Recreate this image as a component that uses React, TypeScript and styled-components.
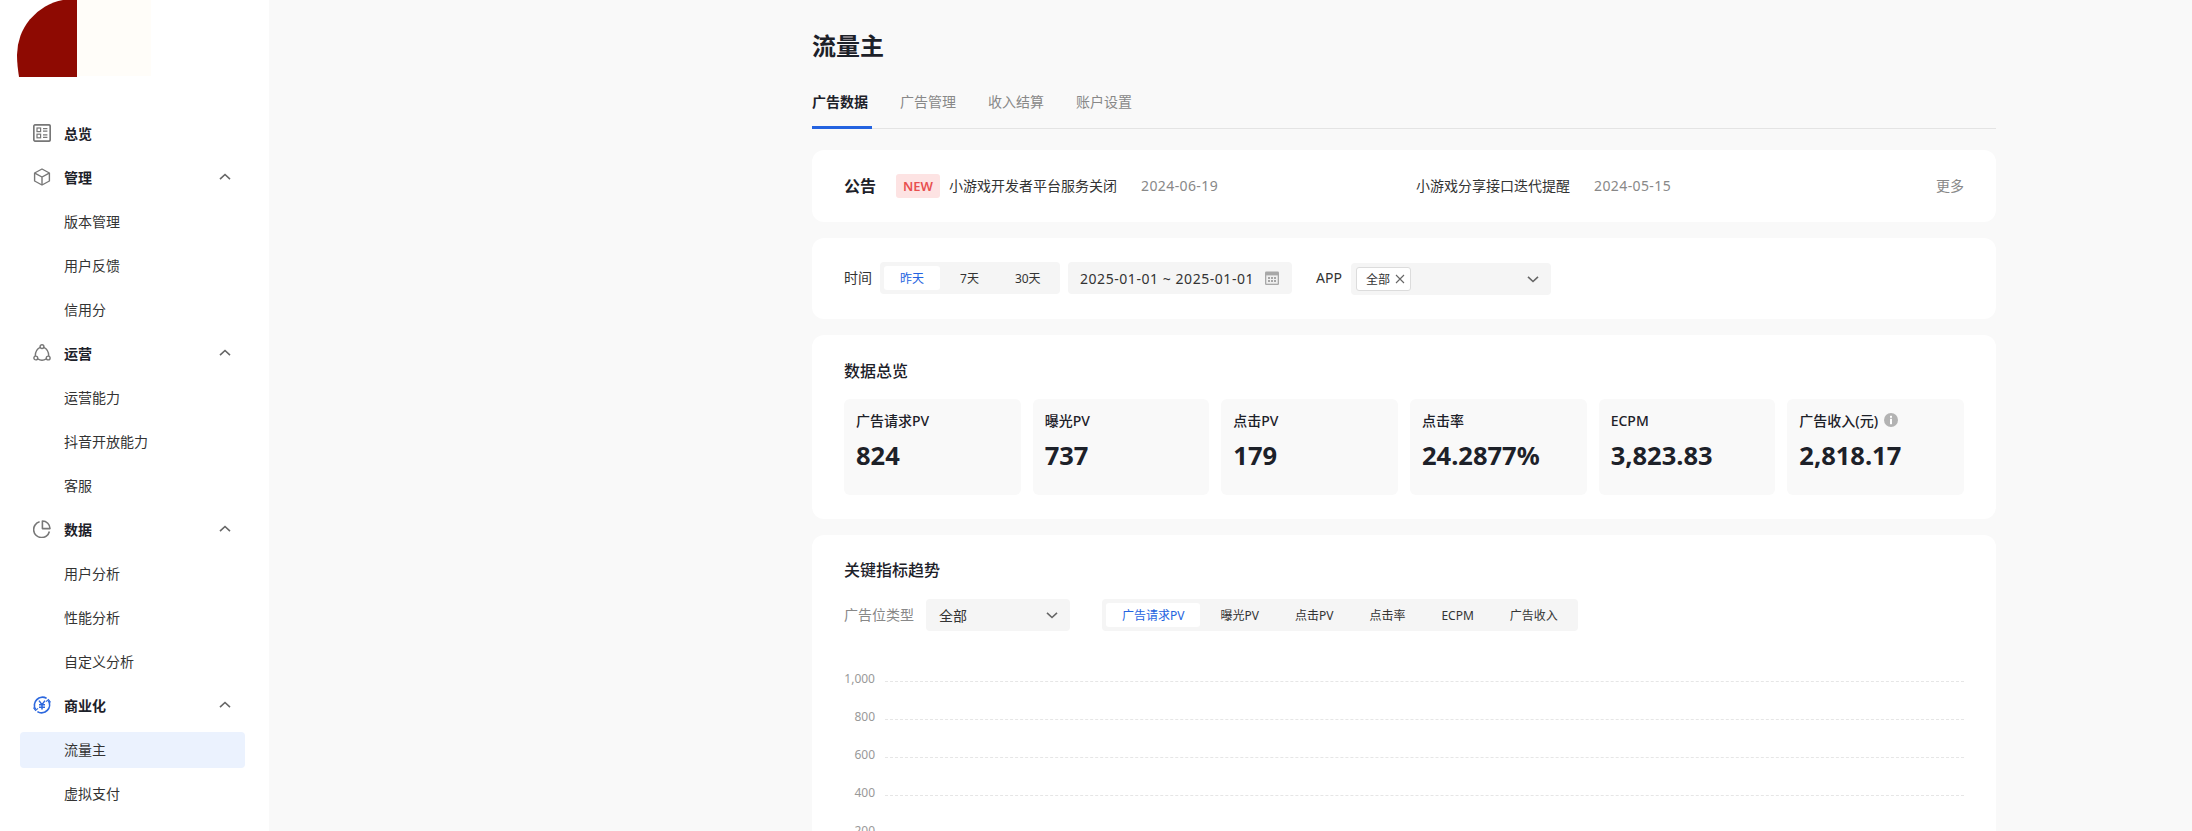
import React from 'react';
import styled, { createGlobalStyle } from 'styled-components';

const Global = createGlobalStyle`
  html, body { margin: 0; padding: 0; height: 100%; overflow: hidden; background: #f9f9f9; }
  body { font-family: "Noto Sans", "Noto Sans CJK SC", sans-serif; color: #1d2129; }
  * { box-sizing: border-box; }
`;

const Page = styled.div`
  display: flex;
  width: 2192px;
  height: 831px;
  overflow: hidden;
`;

const Sidebar = styled.aside`
  width: 269px;
  flex: none;
  height: 831px;
  overflow: hidden;
  background: #fff;
`;

const LogoBox = styled.div`
  height: 77px;
  margin-bottom: 39px;
  line-height: 0;
`;

const Nav = styled.nav`
  display: flex;
  flex-direction: column;
  gap: 8px;
  padding: 0 24px 0 20px;
`;

const NavRow = styled.div<{ $active?: boolean; $group?: boolean }>`
  display: flex;
  align-items: center;
  height: 36px;
  flex: none;
  padding-left: ${p => (p.$group ? 13 : 44)}px;
  padding-right: 14px;
  padding-bottom: 2px;
  border-radius: 4px;
  font-size: 14px;
  font-weight: ${p => (p.$group ? 600 : 400)};
  color: ${p => (p.$group ? '#1d2129' : '#333')};
  background: ${p => (p.$active ? '#ebf2fe' : 'transparent')};
`;

const NavIcon = styled.svg`
  width: 18px;
  height: 18px;
  flex: none;
  margin-right: 13px;
`;

const NavLabel = styled.span`
  flex: 1;
`;

const Main = styled.main`
  flex: 1;
  height: 831px;
  overflow: hidden;
  padding: 30px 0 0 543px;
`;

const Content = styled.div`
  width: 1184px;
  display: flex;
  flex-direction: column;
`;

const Title = styled.h1`
  margin: 0;
  font-size: 24px;
  line-height: 32px;
  font-weight: 700;
  color: #1d2129;
`;

const TabBar = styled.div`
  display: flex;
  gap: 32px;
  margin-top: 29px;
  margin-bottom: 21px;
  border-bottom: 1px solid #e4e4e4;
`;

const Tab = styled.div<{ $active?: boolean }>`
  font-size: 14px;
  line-height: 22px;
  padding: 0 ${p => (p.$active ? 4 : 0)}px 13px 0;
  margin-right: ${p => (p.$active ? -4 : 0)}px;
  margin-bottom: -1px;
  border-bottom: 3px solid ${p => (p.$active ? '#2463e0' : 'transparent')};
  font-weight: ${p => (p.$active ? 600 : 400)};
  color: ${p => (p.$active ? '#1d2129' : '#888')};
`;

const Card = styled.section`
  background: #fff;
  border-radius: 12px;
  padding: 24px 32px;
  margin-bottom: 16px;
`;

const NoticeCard = styled(Card)`
  display: flex;
  align-items: center;
  height: 72px;
  padding: 0 32px;
`;

const NoticeTitle = styled.div`
  width: 52px;
  flex: none;
  padding-bottom: 2px;
  font-size: 16px;
  font-weight: 600;
  color: #1d2129;
`;

const NoticeItem = styled.div`
  width: 520px;
  flex: none;
  display: flex;
  align-items: center;
  padding-bottom: 2px;
  font-size: 14px;
  color: #333;
`;

const NewTag = styled.span`
  display: flex;
  align-items: center;
  justify-content: center;
  width: 44px;
  height: 24px;
  margin-right: 9px;
  margin-bottom: -2px;
  border-radius: 3px;
  background: #fde3e3;
  color: #e8504f;
  font-size: 13px;
  font-weight: 600;
`;

const NoticeDate = styled.span`
  margin-left: 24px;
  color: #888;
  letter-spacing: 0.4px;
`;

const More = styled.span`
  margin-left: auto;
  padding-bottom: 2px;
  font-size: 14px;
  color: #888;
`;

const FilterCard = styled(Card)`
  display: flex;
  align-items: flex-start;
  height: 81px;
`;

const FieldLabel = styled.span<{ $muted?: boolean }>`
  font-size: 14px;
  line-height: 32px;
  color: ${p => (p.$muted ? '#888' : '#333')};
`;

const Segments = styled.div`
  display: flex;
  align-items: center;
  gap: 4px;
  height: 32px;
  padding: 0 4px;
  border-radius: 4px;
  background: #f5f5f5;
`;

const Segment = styled.div<{ $active?: boolean }>`
  display: flex;
  align-items: center;
  height: 24px;
  padding: 0 16px;
  border-radius: 3px;
  font-size: 12px;
  white-space: nowrap;
  background: ${p => (p.$active ? '#fff' : 'transparent')};
  color: ${p => (p.$active ? '#2463e0' : '#333')};
`;

const TimeSegments = styled(Segments)`
  width: 180px;
  margin-left: 8px;
  overflow: hidden;
`;

const DateBox = styled.div`
  display: flex;
  align-items: center;
  justify-content: space-between;
  width: 224px;
  height: 32px;
  margin: 0 24px 0 8px;
  padding: 0 13px 0 12px;
  border-radius: 4px;
  background: #f5f5f5;
  font-size: 14px;
  letter-spacing: 0.55px;
  white-space: nowrap;
  color: #333;
`;

const AppSelect = styled.div`
  display: flex;
  align-items: center;
  justify-content: space-between;
  width: 200px;
  height: 32px;
  margin: 1px 0 0 9px;
  padding: 0 12px 0 5px;
  border-radius: 4px;
  background: #f5f5f5;
`;

const SelectedTag = styled.span`
  display: flex;
  align-items: center;
  gap: 5px;
  width: 55px;
  height: 24px;
  padding-left: 9px;
  border: 1px solid #dcdcdc;
  border-radius: 3px;
  background: #fff;
  font-size: 12px;
  color: #333;
`;

const SectionTitle = styled.h2`
  margin: 0;
  font-size: 16px;
  line-height: 24px;
  font-weight: 500;
  color: #1d2129;
`;

const OverviewCard = styled(Card)`
  height: 184px;
`;

const StatGrid = styled.div`
  display: grid;
  grid-template-columns: repeat(6, 1fr);
  gap: 12px;
  margin-top: 16px;
`;

const Stat = styled.div`
  height: 96px;
  padding: 11px 12px;
  border-radius: 6px;
  background: #f9f9f9;
`;

const StatLabel = styled.div`
  display: flex;
  align-items: center;
  gap: 6px;
  height: 20px;
  font-size: 14px;
  font-weight: 500;
  white-space: nowrap;
  color: #1d2129;
`;

const StatValue = styled.div`
  margin-top: 7px;
  font-size: 25.5px;
  line-height: 36px;
  font-weight: 700;
  color: #1d2129;
`;

const TrendCard = styled(Card)`
  padding-top: 23px;
  height: 420px;
`;

const TrendFilters = styled.div`
  display: flex;
  align-items: center;
  margin-top: 17px;
`;

const TypeSelect = styled.div`
  display: flex;
  align-items: center;
  justify-content: space-between;
  width: 144px;
  height: 32px;
  margin: 0 32px 0 12px;
  padding: 0 12px 0 13px;
  border-radius: 4px;
  background: #f5f5f5;
  font-size: 14px;
  color: #333;
`;

const Chart = styled.div`
  margin-top: 40px;
  display: flex;
  flex-direction: column;
`;

const ChartRow = styled.div`
  display: flex;
  gap: 10px;
  height: 38px;
`;

const ChartLabel = styled.span`
  width: 31px;
  flex: none;
  text-align: right;
  font-size: 12px;
  line-height: 16px;
  color: #999;
`;

const ChartLine = styled.span`
  flex: 1;
  height: 0;
  margin-top: 10px;
  border-top: 1px dashed #e6e6e6;
`;

const Chevron = ({ up, size = 12, color = '#666' }: { up?: boolean; size?: number; color?: string }) => (
  <svg width={size} height={size} viewBox="0 0 12 12" fill="none" style={{ flex: 'none' }}>
    <polyline
      points={up ? '1,8.2 6,3.5 11,8.2' : '1,3.8 6,8.5 11,3.8'}
      stroke={color}
      strokeWidth="1.6"
    />
  </svg>
);

const iconStroke = { fill: 'none', stroke: '#777', strokeWidth: 1.4 } as const;

const OverviewIcon = () => (
  <NavIcon viewBox="0 0 18 18">
    <rect x="0.8" y="0.8" width="16.4" height="16.4" rx="1.6" {...iconStroke} strokeWidth={1.7} />
    <rect x="4" y="4" width="3.6" height="3.6" {...iconStroke} strokeWidth={1.2} />
    <rect x="4" y="10.2" width="3.6" height="3.6" {...iconStroke} strokeWidth={1.2} />
    <path d="M10 4.6h4.4M10 7.2h4.4M10 10.8h4.4M10 13.4h4.4" {...iconStroke} strokeWidth={1.2} />
  </NavIcon>
);

const CubeIcon = () => (
  <NavIcon viewBox="0 0 18 18">
    <path d="M9 1 L16.4 5 V13 L9 17 L1.6 13 V5 Z" {...iconStroke} strokeLinejoin="round" />
    <path d="M1.8 5.1 L9 9 L16.2 5.1 M9 9 V16.8" {...iconStroke} />
  </NavIcon>
);

const OpsIcon = () => (
  <NavIcon viewBox="0 0 18 18">
    <circle cx="9" cy="2.6" r="1.9" {...iconStroke} />
    <circle cx="2.8" cy="14" r="1.9" {...iconStroke} />
    <circle cx="15.2" cy="14" r="1.9" {...iconStroke} />
    <path d="M7.2 3.4 C4 5 2.2 8 2.3 12.1 M10.8 3.4 C14 5 15.8 8 15.7 12.1 M4.7 14.9 C7.2 16.4 10.8 16.4 13.3 14.9" {...iconStroke} />
  </NavIcon>
);

const PieIcon = () => (
  <NavIcon viewBox="0 0 18 18">
    <path d="M6.6 1.8 A8 8 0 1 0 16.4 11.5" {...iconStroke} strokeWidth={1.6} />
    <path d="M9.4 1 A7.6 7.6 0 0 1 17 8.6 H9.4 Z" {...iconStroke} strokeWidth={1.6} strokeLinejoin="round" />
  </NavIcon>
);

const YenIcon = () => (
  <NavIcon viewBox="0 0 18 18">
    <path d="M2.6 13.4 A8 8 0 0 1 13.6 2.4" fill="none" stroke="#2d68de" strokeWidth="1.7" />
    <path d="M15.4 4.6 A8 8 0 0 1 4.4 15.6" fill="none" stroke="#2d68de" strokeWidth="1.7" />
    <path d="M0.4 11.6 L2.6 14.4 L5 12.4 M17.6 6.4 L15.4 3.6 L13 5.6" fill="none" stroke="#2d68de" strokeWidth="1.2" />
    <path d="M6 4.6 L9 8.6 L12 4.6 M9 8.6 V13.6 M6 8.8 H12 M6 11.2 H12" fill="none" stroke="#2d68de" strokeWidth="1.5" />
  </NavIcon>
);

const CalendarIcon = () => (
  <svg width="14" height="14" viewBox="0 0 14 14" style={{ flex: 'none' }}>
    <rect x="0" y="0.5" width="14" height="13.5" rx="1.2" fill="#a8a8a8" />
    <rect x="1.3" y="4.4" width="11.4" height="8.3" fill="#f0f0f0" />
    <path d="M3 6.2h2v1.6H3zM6 6.2h2v1.6H6zM9 6.2h2v1.6H9zM3 9.2h2v1.6H3zM6 9.2h2v1.6H6zM9 9.2h2v1.6H9z" fill="#8d8d8d" />
  </svg>
);

const CloseIcon = () => (
  <svg width="10" height="10" viewBox="0 0 10 10" style={{ flex: 'none' }}>
    <path d="M1 1 L9 9 M9 1 L1 9" stroke="#666" strokeWidth="1.1" />
  </svg>
);

const InfoIcon = () => (
  <svg width="14" height="14" viewBox="0 0 14 14" style={{ flex: 'none' }}>
    <circle cx="7" cy="7" r="7" fill="#b3b3b3" />
    <rect x="6" y="2.8" width="2" height="2" fill="#fff" />
    <rect x="6" y="5.8" width="2" height="5.4" fill="#fff" />
  </svg>
);

const groups: { icon: React.ReactNode; label: string; items?: string[]; active?: string }[] = [
  { icon: <OverviewIcon />, label: '总览' },
  { icon: <CubeIcon />, label: '管理', items: ['版本管理', '用户反馈', '信用分'] },
  { icon: <OpsIcon />, label: '运营', items: ['运营能力', '抖音开放能力', '客服'] },
  { icon: <PieIcon />, label: '数据', items: ['用户分析', '性能分析', '自定义分析'] },
  { icon: <YenIcon />, label: '商业化', items: ['流量主', '虚拟支付'], active: '流量主' },
];

const stats = [
  { label: '广告请求PV', value: '824' },
  { label: '曝光PV', value: '737' },
  { label: '点击PV', value: '179' },
  { label: '点击率', value: '24.2877%' },
  { label: 'ECPM', value: '3,823.83' },
  { label: '广告收入(元)', value: '2,818.17', info: true },
];

const metrics = ['广告请求PV', '曝光PV', '点击PV', '点击率', 'ECPM', '广告收入'];
const ticks = ['1,000', '800', '600', '400', '200'];

export default function App() {
  return (
    <Page>
      <Global />
      <Sidebar>
        <LogoBox>
          <svg width="152" height="77" viewBox="0 0 152 77">
            <rect x="77" y="0" width="74" height="76" fill="#fffdf9" />
            <path d="M77 0 L63 0 A56 56 0 0 0 17 55 C17 63 18 70 19 77 L77 77 Z" fill="#8e0a02" />
          </svg>
        </LogoBox>
        <Nav>
          {groups.map(g => (
            <React.Fragment key={g.label}>
              <NavRow $group>
                {g.icon}
                <NavLabel>{g.label}</NavLabel>
                {g.items && <Chevron up />}
              </NavRow>
              {g.items?.map(item => (
                <NavRow key={item} $active={item === g.active}>
                  {item}
                </NavRow>
              ))}
            </React.Fragment>
          ))}
        </Nav>
      </Sidebar>
      <Main>
        <Content>
          <Title>流量主</Title>
          <TabBar>
            <Tab $active>广告数据</Tab>
            <Tab>广告管理</Tab>
            <Tab>收入结算</Tab>
            <Tab>账户设置</Tab>
          </TabBar>

          <NoticeCard>
            <NoticeTitle>公告</NoticeTitle>
            <NoticeItem>
              <NewTag>NEW</NewTag>
              小游戏开发者平台服务关闭
              <NoticeDate>2024-06-19</NoticeDate>
            </NoticeItem>
            <NoticeItem>
              小游戏分享接口迭代提醒
              <NoticeDate>2024-05-15</NoticeDate>
            </NoticeItem>
            <More>更多</More>
          </NoticeCard>

          <FilterCard>
            <FieldLabel>时间</FieldLabel>
            <TimeSegments>
              <Segment $active>昨天</Segment>
              <Segment>7天</Segment>
              <Segment>30天</Segment>
            </TimeSegments>
            <DateBox>
              2025-01-01 ~ 2025-01-01
              <CalendarIcon />
            </DateBox>
            <FieldLabel>APP</FieldLabel>
            <AppSelect>
              <SelectedTag>
                全部
                <CloseIcon />
              </SelectedTag>
              <Chevron />
            </AppSelect>
          </FilterCard>

          <OverviewCard>
            <SectionTitle>数据总览</SectionTitle>
            <StatGrid>
              {stats.map(s => (
                <Stat key={s.label}>
                  <StatLabel>
                    {s.label}
                    {s.info && <InfoIcon />}
                  </StatLabel>
                  <StatValue>{s.value}</StatValue>
                </Stat>
              ))}
            </StatGrid>
          </OverviewCard>

          <TrendCard>
            <SectionTitle>关键指标趋势</SectionTitle>
            <TrendFilters>
              <FieldLabel $muted>广告位类型</FieldLabel>
              <TypeSelect>
                全部
                <Chevron />
              </TypeSelect>
              <Segments>
                {metrics.map((m, i) => (
                  <Segment key={m} $active={i === 0}>
                    {m}
                  </Segment>
                ))}
              </Segments>
            </TrendFilters>
            <Chart>
              {ticks.map(t => (
                <ChartRow key={t}>
                  <ChartLabel>{t}</ChartLabel>
                  <ChartLine />
                </ChartRow>
              ))}
            </Chart>
          </TrendCard>
        </Content>
      </Main>
    </Page>
  );
}
